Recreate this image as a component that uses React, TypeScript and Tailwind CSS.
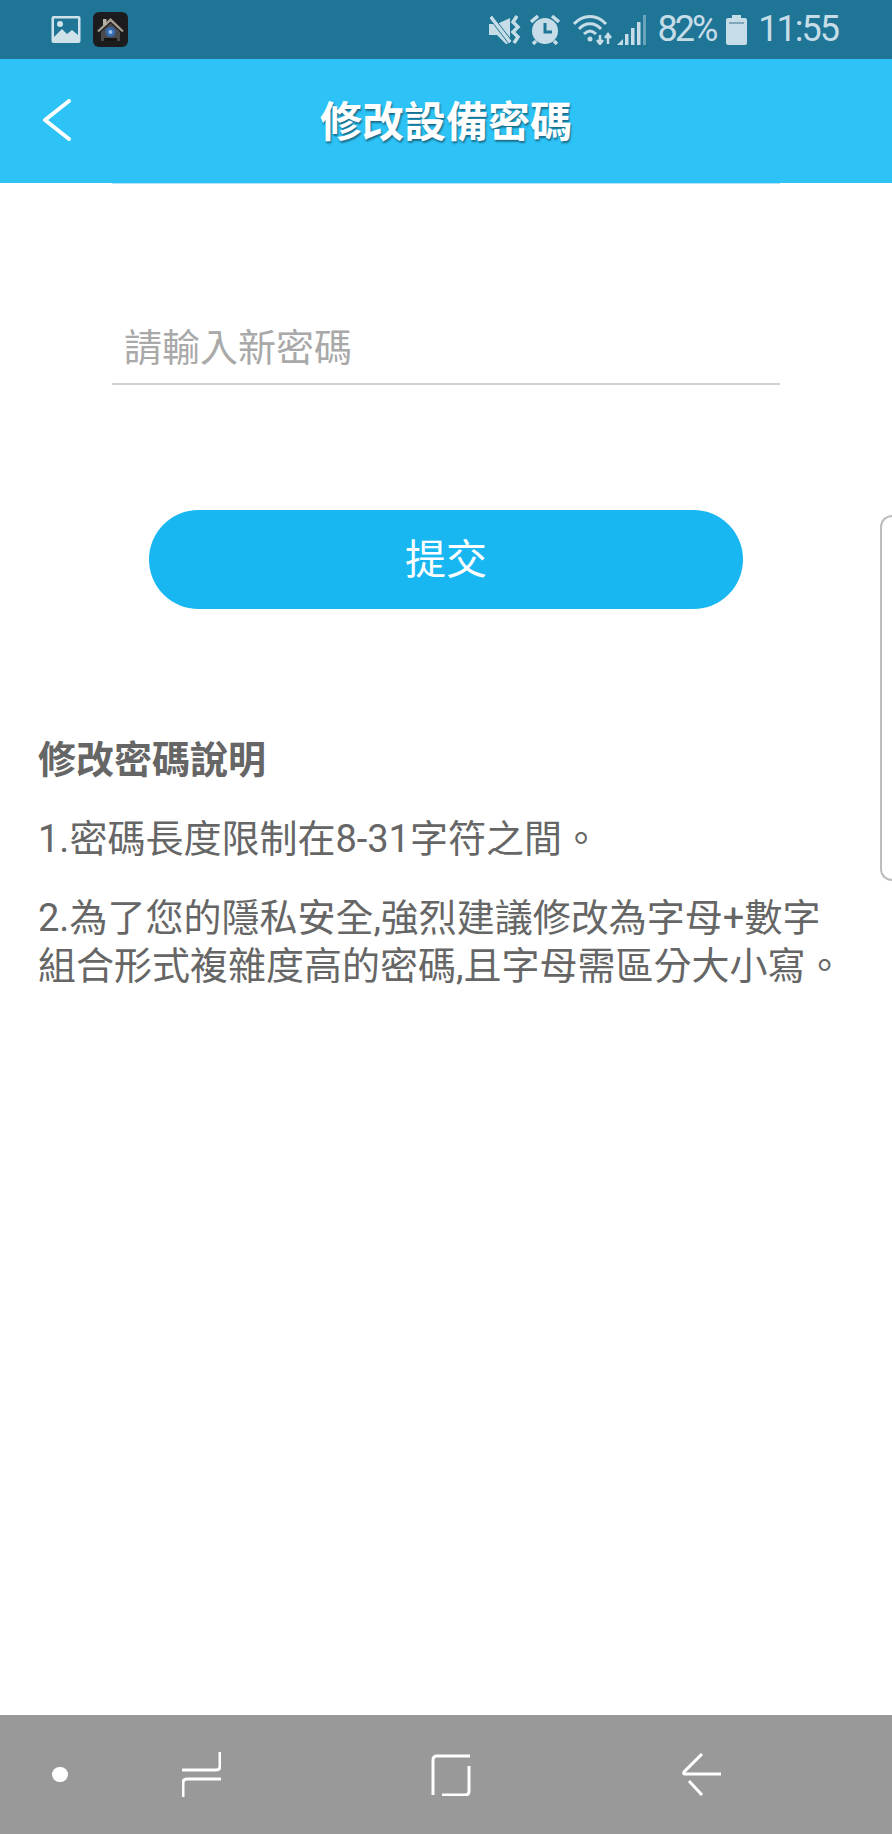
const cjk = "font-['Roboto','Noto_Sans_CJK_TC',sans-serif]";

function PictureIcon() {
  return (
    <svg width="30" height="29" viewBox="0 0 30 29" className="ml-[51px]">
      <rect x="0.5" y="1" width="29" height="27" rx="2" fill="#cfe2ea" />
      <rect x="3" y="3.5" width="24" height="20" fill="#1f7596" />
      <circle cx="9" cy="9" r="3" fill="#cfe2ea" />
      <path d="M3 22l8-8 5 5 5-4 6 5v5H3z" fill="#cfe2ea" />
    </svg>
  );
}

function AppIcon() {
  return (
    <svg width="35" height="35" viewBox="0 0 35 35" className="ml-[12px]">
      <rect width="35" height="35" rx="6" fill="#1c1c1f" />
      <path d="M4 19L17.5 6 31 19l-2 1L17.5 9.5 6 20z" fill="#a79f92" />
      <rect x="10" y="7" width="3.5" height="6" fill="#b9b1a5" />
      <path d="M8 20l9.5-9 9.500 9v9H8z" fill="#4a4a4c" />
      <circle cx="17.500" cy="20" r="5" fill="#3569ad" />
      <circle cx="17.500" cy="20" r="2" fill="#9cc1e6" />
      <rect x="11" y="26" width="13" height="3" fill="#151515" />
    </svg>
  );
}

function MuteIcon() {
  return (
    <svg width="33" height="30" viewBox="0 0 33 30" fill="#c6dde7">
      <path d="M0 9h8L21 3v25l-4 1-9-9H0z" />
      <path d="M3 0l20 26-3 3L0 3z" stroke="#1f7596" strokeWidth="1" />
      <path d="M28 1l-4 6 5 5-5 5 5 5-4 6" fill="none" stroke="#c6dde7" strokeWidth="3.500" />
    </svg>
  );
}

function AlarmIcon() {
  return (
    <svg width="30" height="31" viewBox="0 0 30 31">
      <circle cx="15" cy="17" r="13" fill="#c6dde7" />
      <path d="M15 9v9h7" fill="none" stroke="#1f7596" strokeWidth="3" />
      <path d="M1 8l7-6M29 8l-7-6" stroke="#c6dde7" strokeWidth="3.500" />
      <path d="M6 27l-3 3M24 27l3 3" stroke="#c6dde7" strokeWidth="3.500" />
    </svg>
  );
}

function WifiIcon() {
  return (
    <svg width="40" height="31" viewBox="0 0 40 31" fill="none" stroke="#c6dde7" strokeWidth="3">
      <path d="M1 10C10 0 24 0 33 10" />
      <path d="M6 15c6-7 16-7 22 0" />
      <path d="M11 20c4-4 8-4 12 0" />
      <circle cx="17" cy="25" r="2.500" fill="#c6dde7" stroke="none" />
      <path d="M27 21v8M24 26l3 4 3-4" strokeWidth="2.500" />
      <path d="M35 30v-9M32 24l3-4 3 4" strokeWidth="2.500" />
    </svg>
  );
}

function SignalIcon() {
  return (
    <svg width="30" height="30" viewBox="0 0 30 30" fill="#c6dde7">
      <path d="M0 30l6-6v6z" />
      <rect x="8" y="19" width="3.500" height="11" />
      <rect x="14" y="13" width="3.500" height="17" />
      <rect x="20" y="7" width="3.500" height="23" />
      <rect x="26" y="0" width="3" height="30" opacity="0.45" />
    </svg>
  );
}

function BatteryIcon() {
  return (
    <svg width="21" height="30" viewBox="0 0 21 30" fill="#c6dde7">
      <rect x="6" y="0" width="9" height="3" />
      <path d="M2 3h17a2 2 0 0 1 2 2v23a2 2 0 0 1-2 2H2a2 2 0 0 1-2-2V5a2 2 0 0 1 2-2z" />
      <rect x="3" y="7" width="15" height="2" fill="#7fa9bb" />
    </svg>
  );
}

function RecentsIcon() {
  return (
    <svg width="39" height="45" viewBox="0 0 39 45" fill="none" stroke="#fff" strokeWidth="3" strokeLinecap="round">
      <path d="M38 1v13q0 4-4 4H1" />
      <path d="M38 27H5q-4 0-4 4v13" />
    </svg>
  );
}

function HomeIcon() {
  return (
    <svg width="40" height="42" viewBox="0 0 40 42" fill="none" stroke="#fff" strokeWidth="3">
      <path d="M39 2H6Q2 2 2 6v35" />
      <path d="M38 12v25q0 4-4 4H11" />
    </svg>
  );
}

function BackIcon() {
  return (
    <svg width="39" height="43" viewBox="0 0 39 43" fill="none" stroke="#fff" strokeWidth="3">
      <path d="M20 1L2 19q-1 2 1 2h36" />
      <path d="M7 28l13 14" />
    </svg>
  );
}

export default function App() {
  return (
    <div className={`relative flex h-[1834px] w-[892px] flex-col overflow-hidden bg-white ${cjk}`}>
      {/* Android status bar */}
      <div className="flex h-[59px] shrink-0 items-center justify-between bg-[#1f7596] pr-[54px]">
        <div className="flex items-center">
          <PictureIcon />
          <AppIcon />
        </div>
        <div className="flex items-center text-[#c6dde7]">
          <MuteIcon />
          <span className="ml-[8px] flex"><AlarmIcon /></span>
          <span className="ml-[13px] flex"><WifiIcon /></span>
          <span className="ml-[4px] flex"><SignalIcon /></span>
          <span className="ml-[11px] text-[36px] leading-[59px] tracking-[-3px]">82%</span>
          <span className="ml-[11px] flex"><BatteryIcon /></span>
          <span className="ml-[11px] text-[36px] leading-[59px] tracking-[-2px]">11:55</span>
        </div>
      </div>

      {/* App header */}
      <header className="relative flex h-[124px] shrink-0 items-center justify-center bg-[#2dc3f7] pt-[3px]">
        <svg width="30" height="44" viewBox="0 0 30 44" fill="none" stroke="#fff" strokeWidth="4" strokeLinecap="round" strokeLinejoin="round" className="absolute left-[42px] top-[40px]">
          <path d="M27 2L3 21l24 19" />
        </svg>
        <h1 className="text-[42px] font-bold leading-none text-white [text-shadow:1px_2px_2px_rgba(0,0,0,0.45)]">修改設備密碼</h1>
      </header>

      {/* Password form */}
      <main className="flex flex-1 flex-col">
        <div className="mx-[112px] h-[1px] bg-[#b5e3f5]" />
        <div className="mx-[112px] mt-[130px] h-[71px] border-b-2 border-[#d2d2d2]">
          <input
            type="password"
            placeholder="請輸入新密碼"
            className="h-[68px] w-full bg-transparent pl-[12px] text-[38px] outline-none placeholder:text-[#a9a9a9]"
          />
        </div>
        <button className="mx-auto mt-[125px] h-[99px] w-[594px] rounded-full bg-[#19b7f2] pt-[3px] text-[41px] text-white">提交</button>

        <section className="mt-[127px] px-[38px] text-[38px] leading-[48px] text-[#666]">
          <h2 className="font-bold">修改密碼說明</h2>
          <p className="mt-[31px]">1.密碼長度限制在8-31字符之間。</p>
          <p className="mt-[31px]">2.為了您的隱私安全,強烈建議修改為字母+數字組合形式複雜度高的密碼,且字母需區分大小寫。</p>
        </section>
      </main>

      {/* Edge panel handle */}
      <div className="absolute right-0 top-[515px] h-[366px] w-[12px] rounded-l-[12px] border-y-2 border-l-2 border-[#bdbdbd] bg-white" />

      {/* Navigation bar */}
      <nav className="flex h-[119px] shrink-0 items-center bg-[#999] pl-[52px]">
        <div className="h-[15px] w-[16px] rounded-full bg-white" />
        <span className="ml-[114px] flex"><RecentsIcon /></span>
        <span className="ml-[210px] flex"><HomeIcon /></span>
        <span className="ml-[211px] flex"><BackIcon /></span>
      </nav>
    </div>
  );
}
